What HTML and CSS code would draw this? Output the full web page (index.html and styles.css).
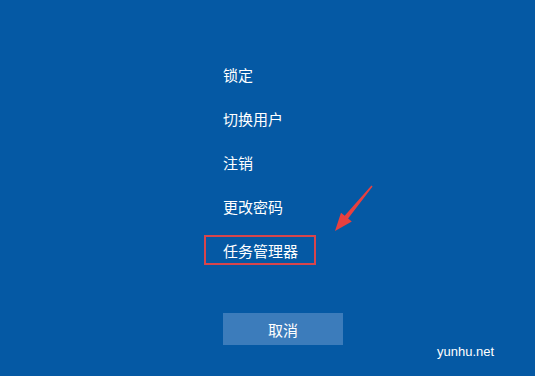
FILE: index.html
```html
<!DOCTYPE html>
<html lang="zh-CN">
<head>
    <meta charset="UTF-8">
    <meta name="viewport" content="width=device-width, initial-scale=1.0">
    <title>安全选项</title>
    <link rel="stylesheet" href="styles.css">
</head>
<body>
    <main class="screen">
        <ul class="options">
            <li class="option">锁定</li>
            <li class="option">切换用户</li>
            <li class="option">注销</li>
            <li class="option">更改密码</li>
            <li class="option"><span class="highlight">任务管理器</span></li>
        </ul>

        <button class="cancel">取消</button>

        <!-- annotation arrow pointing at the task manager entry -->
        <svg class="arrow" width="50" height="60" viewBox="0 0 50 60">
            <path d="M42.4 1.5 L43.6 2.5 L19.1 34.5 L22.8 37.5 L6 47 L12 28.7 L15.7 31.7 Z" fill="#e8403f"/>
        </svg>

        <div class="watermark">yunhu.net</div>
    </main>
</body>
</html>
```

FILE: styles.css
```css
html, body {
    margin: 0;
    padding: 0;
}
body {
    background-color: #0559a4;
    font-family: "Noto Sans CJK SC", "Noto Sans", sans-serif;
    color: #ffffff;
}
.screen {
    position: relative;
    width: 535px;
    height: 376px;
    padding: 52px 0 0 223px;
    box-sizing: border-box;
}
.options {
    list-style: none;
    margin: 0;
    padding: 0;
}
.option {
    height: 44px;
    display: flex;
    align-items: center;
    font-size: 15px;
}
.highlight {
    display: flex;
    align-items: center;
    height: 26px;
    margin-left: -19px;
    padding: 0 16px 0 17px;
    border: 2px solid #d8454c;
}
.cancel {
    display: block;
    margin-top: 41px;
    width: 120px;
    height: 32px;
    border: none;
    background-color: #3c7cbb;
    color: #ffffff;
    font-family: "Noto Sans CJK SC", sans-serif;
    font-size: 15px;
    padding: 0;
}
.arrow {
    position: absolute;
    left: 329px;
    top: 184px;
}
.watermark {
    position: absolute;
    left: 437px;
    top: 344px;
    font-family: "Liberation Sans", Arial, sans-serif;
    font-size: 13px;
}
```
